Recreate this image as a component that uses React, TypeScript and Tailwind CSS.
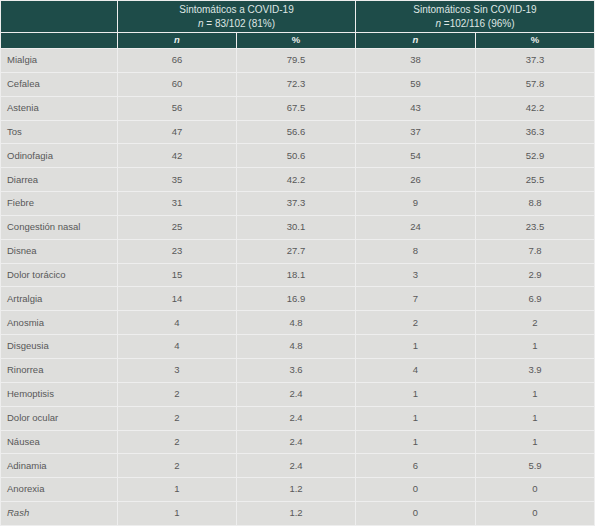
const rows: [string, string, string, string, string, boolean?][] = [
  ["Mialgia", "66", "79.5", "38", "37.3"],
  ["Cefalea", "60", "72.3", "59", "57.8"],
  ["Astenia", "56", "67.5", "43", "42.2"],
  ["Tos", "47", "56.6", "37", "36.3"],
  ["Odinofagia", "42", "50.6", "54", "52.9"],
  ["Diarrea", "35", "42.2", "26", "25.5"],
  ["Fiebre", "31", "37.3", "9", "8.8"],
  ["Congestión nasal", "25", "30.1", "24", "23.5"],
  ["Disnea", "23", "27.7", "8", "7.8"],
  ["Dolor torácico", "15", "18.1", "3", "2.9"],
  ["Artralgia", "14", "16.9", "7", "6.9"],
  ["Anosmia", "4", "4.8", "2", "2"],
  ["Disgeusia", "4", "4.8", "1", "1"],
  ["Rinorrea", "3", "3.6", "4", "3.9"],
  ["Hemoptisis", "2", "2.4", "1", "1"],
  ["Dolor ocular", "2", "2.4", "1", "1"],
  ["Náusea", "2", "2.4", "1", "1"],
  ["Adinamia", "2", "2.4", "6", "5.9"],
  ["Anorexia", "1", "1.2", "0", "0"],
  ["Rash", "1", "1.2", "0", "0", true],
];

export default function App() {
  return (
    <div className="w-[597px] h-[528px] bg-white font-['Liberation_Sans',Arial,sans-serif]">
      <div className="w-[595px] bg-[#eeeeee] p-px grid grid-cols-[116px_118px_118px_119px_118px] gap-px auto-rows-[22.85px] grid-rows-[31px_15px]">
        {/* header */}
        <div className="bg-[#1e4c49]" />
        <div className="col-span-2 bg-[#1e4c49] text-[#dfe6e4] text-[10px] leading-[14px] flex flex-col items-center justify-center">
          <span>Sintomáticos a COVID-19</span>
          <span>
            <i>n</i> = 83/102 (81%)
          </span>
        </div>
        <div className="col-span-2 bg-[#1e4c49] text-[#dfe6e4] text-[10px] leading-[14px] flex flex-col items-center justify-center">
          <span>Sintomáticos Sin COVID-19</span>
          <span>
            <i>n</i> =102/116 (96%)
          </span>
        </div>
        <div className="bg-[#1e4c49]" />
        <div className="bg-[#1e4c49] text-[#e8eeec] text-[9.5px] font-bold italic flex items-center justify-center">n</div>
        <div className="bg-[#1e4c49] text-[#e8eeec] text-[9.5px] font-bold flex items-center justify-center">%</div>
        <div className="bg-[#1e4c49] text-[#e8eeec] text-[9.5px] font-bold italic flex items-center justify-center">n</div>
        <div className="bg-[#1e4c49] text-[#e8eeec] text-[9.5px] font-bold flex items-center justify-center">%</div>

        {/* body */}
        {rows.map(([name, a, b, c, d, it]) => (
          <div key={name} className="contents text-[9.5px] text-[#585858]">
            <div className={`bg-[#dededc] flex items-center pl-[6px] ${it ? "italic" : ""}`}>{name}</div>
            <div className="bg-[#dededc] flex items-center justify-center">{a}</div>
            <div className="bg-[#dededc] flex items-center justify-center">{b}</div>
            <div className="bg-[#dededc] flex items-center justify-center">{c}</div>
            <div className="bg-[#dededc] flex items-center justify-center">{d}</div>
          </div>
        ))}
      </div>
    </div>
  );
}
